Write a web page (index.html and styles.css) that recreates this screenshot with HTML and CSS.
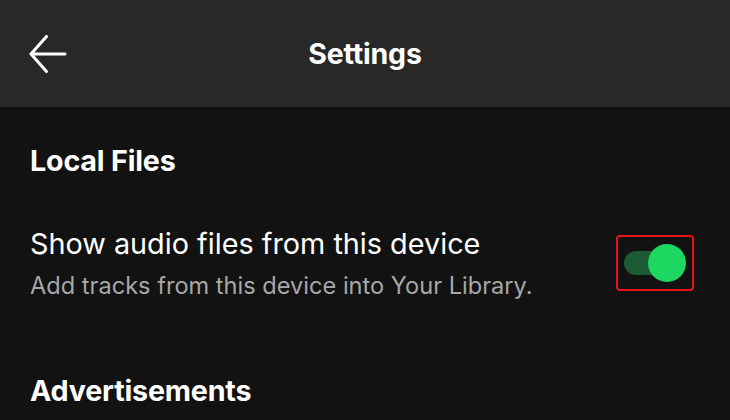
FILE: index.html
```html
<!DOCTYPE html>
<html>
<head>
<meta charset="utf-8">
<link rel="stylesheet" href="styles.css">
</head>
<body>
<header class="topbar">
  <button class="back" aria-label="Back">
    <svg width="38" height="38" viewBox="0 0 38 38"><path d="M17.5 1.5 L2 19 L17.5 36.5 M2 19 H36" fill="none" stroke="#fff" stroke-width="3" stroke-linecap="round" stroke-linejoin="round"/></svg>
  </button>
  <h1 class="title">Settings</h1>
</header>
<main class="content">
  <h2 class="section">Local Files</h2>
  <div class="row">
    <div class="row-text">
      <div class="row-title">Show audio files from this device</div>
      <div class="row-sub">Add tracks from this device into Your Library.</div>
    </div>
    <div class="highlight">
      <div class="toggle"><span class="track"></span><span class="knob"></span></div>
    </div>
  </div>
  <h2 class="section ads">Advertisements</h2>
</main>
</body>
</html>
```
FILE: styles.css
```css
html, body { margin: 0; padding: 0; }
body {
  width: 730px; height: 420px; overflow: hidden;
  background: #121212; color: #fff;
  font-family: Inter, "Noto Sans", sans-serif;
}
.topbar {
  height: 107px; background: #282828;
  display: flex; align-items: center; position: relative;
}
.back {
  background: none; border: 0; padding: 0; margin-left: 29px;
  width: 38px; height: 38px; display: flex;
}
.title {
  position: absolute; left: 0; right: 0; text-align: center;
  margin: 0; font-size: 28.5px; line-height: 35px; font-weight: 700; letter-spacing: -0.2px;
}
.content { padding: 0 30px; }
.section { margin: 0; font-size: 28.7px; font-weight: 700; padding-top: 36px; line-height: 35px; letter-spacing: -0.2px; }
.row { display: flex; align-items: center; justify-content: space-between; margin-top: 48px; }
.row-title { font-size: 28.8px; line-height: 35px; }
.row-sub { font-size: 23.6px; line-height: 28px; color: #a7a7a7; margin-top: 11px; }
.highlight {
  width: 74px; height: 52px; border: 2px solid #e8121b; border-radius: 4px;
  display: flex; align-items: center; justify-content: center; margin-right: 6px;
}
.toggle { position: relative; width: 62px; height: 38px; }
.track { position: absolute; left: 0; top: 7px; width: 56px; height: 24px; border-radius: 12px; background: #1c5b34; }
.knob { position: absolute; right: 0; top: 0; width: 38px; height: 38px; border-radius: 50%; background: #1ed760; }
.ads { padding-top: 73px; }
```
